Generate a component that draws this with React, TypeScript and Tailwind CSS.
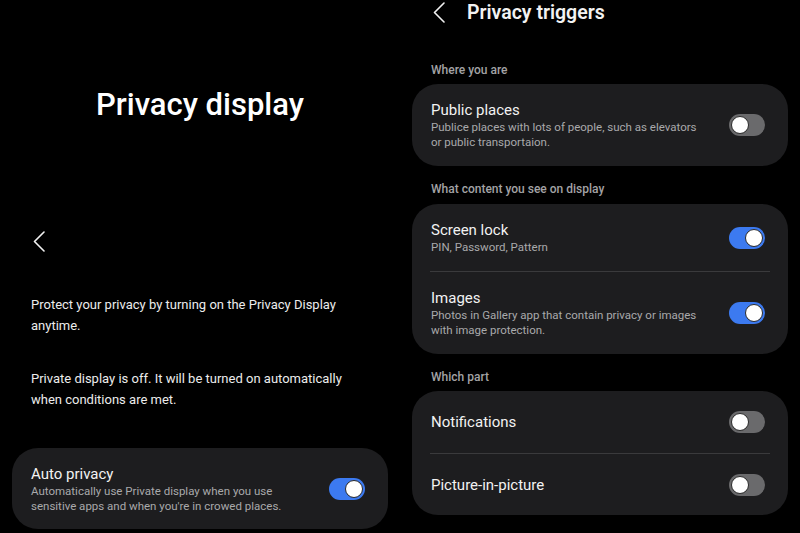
import React from "react";

function Chevron({ className }: { className?: string }) {
  return (
    <svg className={className} width="12" height="21" viewBox="0 0 12 21" fill="none">
      <path d="M11 1 L1.5 10.5 L11 20" stroke="#f2f2f2" strokeWidth="1.6" strokeLinecap="round" strokeLinejoin="round" />
    </svg>
  );
}

function Toggle({ on }: { on: boolean }) {
  return (
    <div
      className={
        "w-[36px] h-[22px] rounded-full flex items-center px-[2px] shrink-0 " +
        (on ? "bg-[#3c7af0] justify-end" : "bg-[#6a6a6c] justify-start")
      }
    >
      <div className="w-[18px] h-[18px] rounded-full bg-white border border-[#2a2a2a]" />
    </div>
  );
}

function Row({ title, sub, on }: { title: string; sub?: string; on: boolean }) {
  return (
    <div className="flex items-center justify-between">
      <div className="flex flex-col">
        <div className="text-[15px] leading-[20px] text-[#f2f2f2]">{title}</div>
        {sub && (
          <div className="text-[11.5px] leading-[15px] text-[#a9a9ab] w-[272px]">{sub}</div>
        )}
      </div>
      <Toggle on={on} />
    </div>
  );
}

function SectionLabel({ children, className }: { children: React.ReactNode; className?: string }) {
  return (
    <div className={"pl-[19px] text-[12px] leading-[16px] font-medium text-[#a3a3a5] " + (className ?? "")}>
      {children}
    </div>
  );
}

export default function App() {
  return (
    <div
      className="flex w-[800px] h-[533px] bg-black overflow-hidden"
      style={{ fontFamily: "Roboto, 'Noto Sans', sans-serif" }}
    >
      {/* Left screen */}
      <div className="w-[400px] flex flex-col">
        <h1 className="mt-[87px] text-center text-[31px] leading-[36px] font-medium text-white">
          Privacy display
        </h1>
        <Chevron className="mt-[108px] ml-[33px]" />
        <p className="mt-[42px] ml-[31px] w-[330px] text-[13px] leading-[21px] text-[#ececec]">
          Protect your privacy by turning on the Privacy Display anytime.
        </p>
        <p className="mt-[32px] ml-[31px] w-[330px] text-[13px] leading-[21px] text-[#ececec]">
          Private display is off. It will be turned on automatically when conditions are met.
        </p>
        <div className="mt-[38px] mx-[12px] bg-[#1d1d1f] rounded-[26px] pl-[19px] pr-[23px] pt-[16px] pb-[15px]">
          <Row
            title="Auto privacy"
            sub="Automatically use Private display when you use sensitive apps and when you're in crowed places."
            on
          />
        </div>
      </div>

      {/* Right screen */}
      <div className="w-[400px] flex flex-col px-[12px]">
        <div className="flex items-center h-[26px]">
          <Chevron className="ml-[21px] -mt-[2px]" />
          <div className="ml-[22px] text-[19.5px] leading-[26px] font-semibold text-[#f2f2f2]">
            Privacy triggers
          </div>
        </div>

        <SectionLabel className="mt-[36px]">Where you are</SectionLabel>
        <div className="mt-[6px] bg-[#1d1d1f] rounded-[26px] pl-[19px] pr-[23px] pt-[16px] pb-[16px]">
          <Row
            title="Public places"
            sub="Publice places with lots of people, such as elevators or public transportaion."
            on={false}
          />
        </div>

        <SectionLabel className="mt-[15px]">What content you see on display</SectionLabel>
        <div className="mt-[7px] bg-[#1d1d1f] rounded-[26px] px-[18px]">
          <div className="pl-[1px] pr-[5px] pt-[16px] pb-[16px]">
            <Row title="Screen lock" sub="PIN, Password, Pattern" on />
          </div>
          <div className="h-px bg-[#3a3a3c]" />
          <div className="pl-[1px] pr-[5px] pt-[16px] pb-[16px]">
            <Row
              title="Images"
              sub="Photos in Gallery app that contain privacy or images with image protection."
              on
            />
          </div>
        </div>

        <SectionLabel className="mt-[15px]">Which part</SectionLabel>
        <div className="mt-[6px] bg-[#1d1d1f] rounded-[26px] px-[18px]">
          <div className="h-[62px] flex flex-col justify-center pl-[1px] pr-[5px]">
            <Row title="Notifications" on={false} />
          </div>
          <div className="h-px bg-[#3a3a3c]" />
          <div className="h-[61px] flex flex-col justify-center pl-[1px] pr-[5px]">
            <Row title="Picture-in-picture" on={false} />
          </div>
        </div>
      </div>
    </div>
  );
}
